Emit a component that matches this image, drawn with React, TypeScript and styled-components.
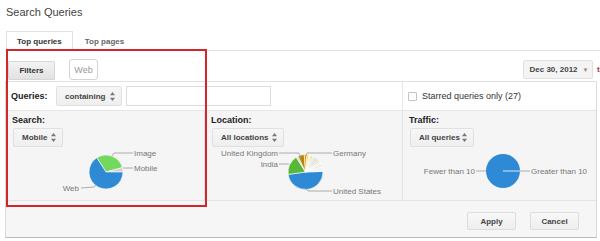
import React from 'react';
import styled, { createGlobalStyle } from 'styled-components';

const GlobalStyle = createGlobalStyle`
	html, body {
		margin: 0;
		padding: 0;
		background: #fff;
		overflow: hidden;
	}
	body {
		font-family: 'Liberation Sans', Arial, sans-serif;
		color: #333;
	}
`;

const Page = styled.div`
	position: relative;
	width: 600px;
	height: 241px;
	padding-left: 5px;
	box-sizing: border-box;
	overflow: hidden;
`;

const Title = styled.h1`
	margin: 5px 0 0 1px;
	font-size: 11px;
	line-height: 14px;
	font-weight: normal;
	color: #444;
`;

const Tabs = styled.div`
	display: flex;
	margin-top: 12px;
	padding-left: 1px;
	border-bottom: 1px solid #e2e2e2;
`;

const Tab = styled.div<{ $active?: boolean }>`
	height: 18px;
	padding: 0 10px;
	margin-right: 1px;
	margin-bottom: -1px;
	display: flex;
	align-items: center;
	font-size: 8px;
	font-weight: bold;
	color: ${(p) => (p.$active ? '#333' : '#666')};
	background: #fff;
	border: 1px solid ${(p) => (p.$active ? '#e2e2e2' : 'transparent')};
	border-bottom-color: ${(p) => (p.$active ? '#fff' : 'transparent')};
`;

const Toolbar = styled.div`
	display: flex;
	align-items: flex-end;
	height: 30px;
	padding-bottom: 1px;
	box-sizing: border-box;
	margin-right: -6px;
`;

const FilterButton = styled.div`
	width: 47px;
	height: 19px;
	margin-left: 3px;
	box-sizing: border-box;
	display: flex;
	align-items: center;
	justify-content: center;
	font-size: 8px;
	font-weight: bold;
	color: #333;
	background: linear-gradient(#f3f3f3, #e2e2e2);
	border: 1px solid #d6d6d6;
	border-radius: 1px;
`;

const SourceChip = styled.div`
	width: 29px;
	height: 21px;
	margin-left: 14px;
	box-sizing: border-box;
	display: flex;
	align-items: center;
	justify-content: center;
	font-size: 9px;
	color: #999;
	background: #fff;
	border: 1px solid #d4d4d4;
	border-radius: 3px;
`;

const DateGroup = styled.div`
	margin-left: auto;
	display: flex;
	align-items: center;
	gap: 4px;
	margin-bottom: 1px;
`;

const DateButton = styled.div`
	width: 70px;
	height: 19px;
	box-sizing: border-box;
	display: flex;
	align-items: center;
	justify-content: center;
	gap: 5px;
	padding-left: 2px;
	font-size: 8px;
	font-weight: bold;
	color: #444;
	background: #f4f4f4;
	border: 1px solid #e0e0e0;
	border-radius: 2px;
`;

const Caret = styled.span`
	font-size: 6px;
	color: #888;
`;

const NextLink = styled.span`
	font-size: 8px;
	font-weight: bold;
	color: #a33;
	width: 9px;
`;

const Panel = styled.div`
	width: 592px;
	box-sizing: border-box;
	border: 1px solid #dadada;
	border-top-color: #e2e2e2;
	border-bottom-color: #bdbdbd;
`;

const QueryRow = styled.div`
	display: grid;
	grid-template-columns: 396px 1fr;
	height: 28px;
	border-bottom: 1px solid #e6e6e6;
	background: #fff;
`;

const QueryCell = styled.div`
	display: flex;
	align-items: center;
	padding-left: 5px;
	& + & {
		border-left: 1px solid #e6e6e6;
		padding-left: 4px;
	}
`;

const FieldLabel = styled.div`
	font-size: 9px;
	line-height: 12px;
	font-weight: bold;
	color: #222;
`;

const QueryLabel = styled(FieldLabel)`
	width: 45px;
`;

const SelectBox = styled.div<{ $width: number }>`
	width: ${(p) => p.$width}px;
	height: 20px;
	box-sizing: border-box;
	padding: 0 6px 0 8px;
	display: flex;
	align-items: center;
	justify-content: space-between;
	font-size: 8px;
	font-weight: bold;
	color: #444;
	background: linear-gradient(#f6f6f6, #efefef);
	border: 1px solid #e0e0e0;
	border-radius: 2px;
`;

const TextInput = styled.div`
	width: 145px;
	height: 20px;
	margin-left: 4px;
	box-sizing: border-box;
	background: #fff;
	border: 1px solid #dcdcdc;
`;

const Checkbox = styled.div`
	width: 9px;
	height: 9px;
	box-sizing: border-box;
	border: 1px solid #c4c4c4;
	border-radius: 1px;
	background: #fff;
	margin: 0 5px 0 1px;
`;

const CheckText = styled.span`
	font-size: 9px;
	color: #333;
`;

const Section = styled.div`
	display: grid;
	grid-template-columns: 198px 198px 1fr;
	height: 89px;
	background: #f5f5f5;
	border-bottom: 1px solid #e4e4e4;
`;

const Column = styled.div`
	padding: 3px 0 0 6px;
	display: flex;
	flex-direction: column;
	align-items: flex-start;
	& + & {
		border-left: 1px solid #e4e4e4;
	}
`;

const ColumnSelect = styled(SelectBox)`
	height: 19px;
	margin-top: 2px;
	margin-left: 1px;
`;

const Chart = styled.svg`
	display: block;
	margin: 1px 0 0 -6px;
	overflow: visible;
	font-family: 'Liberation Sans', Arial, sans-serif;
	font-size: 8px;
`;

const Footer = styled.div`
	height: 36px;
	padding: 11px 17px 0 0;
	box-sizing: border-box;
	display: flex;
	justify-content: flex-end;
	gap: 14px;
	background: #f6f6f6;
`;

const ActionButton = styled.div`
	width: 49px;
	height: 18px;
	box-sizing: border-box;
	display: flex;
	align-items: center;
	justify-content: center;
	font-size: 8px;
	font-weight: bold;
	color: #444;
	background: linear-gradient(#f8f8f8, #eeeeee);
	border: 1px solid #dcdcdc;
	border-radius: 2px;
`;

// annotation frame drawn over the filter area
const Highlight = styled.div`
	position: absolute;
	left: 6px;
	top: 49px;
	width: 201px;
	height: 158px;
	box-sizing: border-box;
	border: 2px solid #d3262c;
	pointer-events: none;
`;

const Arrows = () => (
	<svg width='5' height='9' viewBox='0 0 5 9'>
		<polygon points='2.5,0 5,3.3 0,3.3' fill='#777' />
		<polygon points='0,5.7 5,5.7 2.5,9' fill='#777' />
	</svg>
);

const Select: React.FC<{ label: string; width: number; column?: boolean }> = ({ label, width, column }) => {
	const Box = column ? ColumnSelect : SelectBox;
	return (
		<Box $width={width}>
			<span>{label}</span>
			<Arrows />
		</Box>
	);
};

type Slice = { from: number; to: number; color: string };

const arc = (cx: number, cy: number, r: number, a0: number, a1: number) => {
	const rad = (a: number) => (a * Math.PI) / 180;
	const x0 = cx + r * Math.cos(rad(a0));
	const y0 = cy + r * Math.sin(rad(a0));
	const x1 = cx + r * Math.cos(rad(a1));
	const y1 = cy + r * Math.sin(rad(a1));
	const large = a1 - a0 > 180 ? 1 : 0;
	return `M${cx},${cy} L${x0},${y0} A${r},${r} 0 ${large} 1 ${x1},${y1} Z`;
};

const Pie: React.FC<{ cx: number; cy: number; r: number; slices: Slice[] }> = ({ cx, cy, r, slices }) => (
	<g>
		{slices.map((s, i) => (
			<path key={i} d={arc(cx, cy, r, s.from, s.to)} fill={s.color} stroke='#fff' strokeWidth={0.6} />
		))}
	</g>
);

const LEAD = '#9a9a9a';
const LABEL = '#777';

const searchSlices: Slice[] = [
	{ from: -123, to: -15, color: '#72d85e' },
	{ from: -15, to: 0, color: '#cfcfcf' },
	{ from: 0, to: 237, color: '#2f8ad6' },
];

const locationSlices: Slice[] = [
	{ from: -2, to: 172, color: '#2f8ad6' },
	{ from: 172, to: 238, color: '#58b83a' },
	{ from: 238, to: 245, color: '#d9d9d9' },
	{ from: 245, to: 266, color: '#b8860b' },
	{ from: 266, to: 275, color: '#f39a1d' },
	{ from: 275, to: 282, color: '#f1d94a' },
	{ from: 282, to: 289, color: '#fff3a8' },
	{ from: 289, to: 296, color: '#c6eaa2' },
	{ from: 296, to: 303, color: '#ffe2b8' },
	{ from: 303, to: 310, color: '#b7def6' },
	{ from: 310, to: 317, color: '#f8c6de' },
	{ from: 317, to: 325, color: '#d6efbf' },
	{ from: 325, to: 333, color: '#fff1c4' },
	{ from: 333, to: 343, color: '#e1e8fb' },
	{ from: 343, to: 358, color: '#f3f3f3' },
];

const SearchChart = () => (
	<Chart width={198} height={52}>
		<Pie cx={100} cy={24} r={17} slices={searchSlices} />
		<polyline points='106,8 108,5 127,5' fill='none' stroke={LEAD} strokeWidth={0.8} />
		<text x={128} y={8} fill={LABEL}>Image</text>
		<line x1={117} y1={20} x2={127} y2={20} stroke={LEAD} strokeWidth={0.8} />
		<text x={128} y={23} fill={LABEL}>Mobile</text>
		<polyline points='75,40 88,39 90,37' fill='none' stroke={LEAD} strokeWidth={0.8} />
		<text x={73} y={43} fill={LABEL} textAnchor='end'>Web</text>
	</Chart>
);

const LocationChart = () => (
	<Chart width={198} height={52}>
		<Pie cx={100.5} cy={24} r={17.5} slices={locationSlices} />
		<polyline points='74,5 94,5 96,10' fill='none' stroke={LEAD} strokeWidth={0.8} />
		<text x={73} y={8} fill={LABEL} textAnchor='end'>United Kingdom</text>
		<polyline points='101,8 102,5 127,5' fill='none' stroke={LEAD} strokeWidth={0.8} />
		<text x={128} y={8} fill={LABEL}>Germany</text>
		<line x1={74} y1={16} x2={84} y2={16} stroke={LEAD} strokeWidth={0.8} />
		<text x={73} y={19} fill={LABEL} textAnchor='end'>India</text>
		<polyline points='101,41 103,43 127,43' fill='none' stroke={LEAD} strokeWidth={0.8} />
		<text x={128} y={46} fill={LABEL}>United States</text>
	</Chart>
);

const TrafficChart = () => (
	<Chart width={196} height={52}>
		<circle cx={100} cy={23} r={17} fill='#2f8ad6' />
		<line x1={100} y1={23} x2={117} y2={23} stroke='#fff' strokeWidth={0.8} />
		<line x1={117} y1={23} x2={127} y2={23} stroke={LEAD} strokeWidth={0.8} />
		<text x={128} y={26} fill={LABEL}>Greater than 10</text>
		<line x1={73} y1={23} x2={83} y2={23} stroke={LEAD} strokeWidth={0.8} />
		<text x={72} y={26} fill={LABEL} textAnchor='end'>Fewer than 10</text>
	</Chart>
);

const App: React.FC = () => {
	return (
		<Page>
			<GlobalStyle />
			<Title>Search Queries</Title>
			<Tabs>
				<Tab $active>Top queries</Tab>
				<Tab>Top pages</Tab>
			</Tabs>
			<Toolbar>
				<FilterButton>Filters</FilterButton>
				<SourceChip>Web</SourceChip>
				<DateGroup>
					<DateButton>
						Dec 30, 2012 <Caret>▼</Caret>
					</DateButton>
					<NextLink>to</NextLink>
				</DateGroup>
			</Toolbar>
			<Panel>
				<QueryRow>
					<QueryCell>
						<QueryLabel>Queries:</QueryLabel>
						<Select label='containing' width={66} />
						<TextInput />
					</QueryCell>
					<QueryCell>
						<Checkbox />
						<CheckText>Starred queries only (27)</CheckText>
					</QueryCell>
				</QueryRow>
				<Section>
					<Column>
						<FieldLabel>Search:</FieldLabel>
						<Select label='Mobile' width={50} column />
						<SearchChart />
					</Column>
					<Column>
						<FieldLabel>Location:</FieldLabel>
						<Select label='All locations' width={72} column />
						<LocationChart />
					</Column>
					<Column>
						<FieldLabel>Traffic:</FieldLabel>
						<Select label='All queries' width={64} column />
						<TrafficChart />
					</Column>
				</Section>
				<Footer>
					<ActionButton>Apply</ActionButton>
					<ActionButton>Cancel</ActionButton>
				</Footer>
			</Panel>
			<Highlight />
		</Page>
	);
};

export default App;
